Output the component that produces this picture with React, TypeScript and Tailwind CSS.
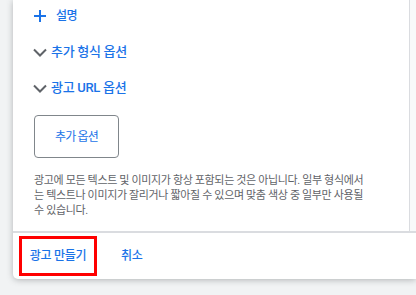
const font = { fontFamily: '"Roboto", "Noto Sans CJK KR", sans-serif' };

function Plus() {
  return (
    <svg width="14" height="14" viewBox="0 0 14 14" className="shrink-0">
      <path d="M7 1v12M1 7h12" stroke="#1a73e8" strokeWidth="2" fill="none" />
    </svg>
  );
}

function Chevron() {
  return (
    <svg width="14" height="9" viewBox="0 0 14 9" className="shrink-0">
      <path d="M1 1.5l6 6 6-6" stroke="#5f6368" strokeWidth="2" fill="none" />
    </svg>
  );
}

export default function App() {
  return (
    <div className="w-[416px] h-[295px] overflow-hidden bg-[#f1f3f4] pl-[13px]" style={font}>
      <div className="h-[279px] bg-white rounded-bl-[5px] shadow-[0_1px_6px_rgba(60,64,67,0.35)] flex flex-col">
        <div className="h-[231px] flex">
          <div className="flex-1 pl-[20px] border-r border-[#dadce0]">
            <div className="h-[32px] mb-[2px] flex items-center">
              <Plus />
              <span className="ml-[9px] text-[12px] font-medium tracking-[-0.5px] text-[#1a73e8]">설명</span>
            </div>
            <div className="h-9 flex items-center">
              <Chevron />
              <span className="ml-[4px] text-[13px] font-medium tracking-[-0.3px] text-[#1a73e8]">추가 형식 옵션</span>
            </div>
            <div className="h-9 flex items-center">
              <Chevron />
              <span className="ml-[4px] text-[13px] font-medium tracking-[-0.3px] text-[#1a73e8]">광고 URL 옵션</span>
            </div>
            <button className="ml-px mt-[9px] w-[85px] h-[43px] rounded-[4px] border border-[#80868b] text-[12px] tracking-[-0.8px] text-[#1a73e8]">
              추가 옵션
            </button>
            <p className="ml-px mt-[15px] w-[360px] text-[11px] leading-[15px] tracking-[-0.35px] text-[#5f6368]">
              광고에 모든 텍스트 및 이미지가 항상 포함되는 것은 아닙니다. 일부 형식에서
              <br />
              는 텍스트나 이미지가 잘리거나 짧아질 수 있으며 맞춤 색상 중 일부만 사용될
              <br />
              수 있습니다.
            </p>
          </div>
          <div className="w-[6px] bg-[#f8f9fa]" />
        </div>
        <div className="h-[2px] bg-[#dadce0]" />
        <div className="flex-1 flex items-center pl-[6px]">
          <button className="w-[78px] h-[40px] border-[3px] border-[#ff0000] text-[12px] font-medium tracking-[-0.3px] text-[#1a73e8]">
            광고 만들기
          </button>
          <button className="ml-[24px] text-[12px] font-medium tracking-[-0.3px] text-[#1a73e8]">취소</button>
        </div>
      </div>
    </div>
  );
}
